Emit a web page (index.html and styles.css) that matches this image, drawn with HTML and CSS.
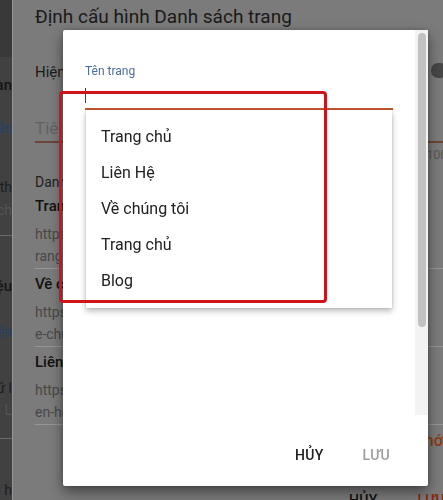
FILE: index.html
```html
<!DOCTYPE html>
<html lang="vi">
<head>
<meta charset="utf-8">
<title>Định cấu hình Danh sách trang</title>
<link rel="stylesheet" href="styles.css">
</head>
<body>
<div class="page">
  <aside class="side">
    <div class="side-head"></div>
    <div class="sl s1 strong"><span>Tổng quan</span></div>
    <div class="sl s2 blue"><span>Thêm vào phần</span></div>
    <div class="sl s3"><span>Danh sách trang th</span></div>
    <div class="sl s4 soft"><span>Các trang tĩnh ch</span></div>
    <div class="side-sep s5"></div>
    <div class="sl s6 strong"><span>Giới thiệu</span></div>
    <div class="sl s7 blue"><span>Chỉnh sửa tiên</span></div>
    <div class="sl s8"><span>Lưu trữ l</span></div>
    <div class="sl s9 soft"><span>Nhãn n L</span></div>
    <div class="side-sep s10"></div>
    <div class="sl s11"><span>Theo dõi u h</span></div>
  </aside>
  <main class="main">
    <h1 class="page-title">Định cấu hình Danh sách trang</h1>
    <div class="toggle-row">
      <span>Hiện tiêu đề</span>
      <span class="toggle"></span>
    </div>
    <div class="title-field">Tiêu đề</div>
    <div class="counter">0/100</div>
    <div class="sec">Danh sách trang</div>
    <div class="pitem">
      <div class="pt">Trang chủ</div>
      <div class="pu first">https://www.blog.com/p/t</div>
      <div class="pu">rang-chu.html</div>
    </div>
    <div class="pitem">
      <div class="pt">Về chúng tôi</div>
      <div class="pu first">https://www.blog.com/p/v</div>
      <div class="pu">e-chung-toi.html</div>
    </div>
    <div class="pitem">
      <div class="pt">Liên Hệ</div>
      <div class="pu first">https://www.blog.com/p/li</div>
      <div class="pu">en-he.html</div>
    </div>
    <div class="add">Thêm trang mới</div>
    <div class="foot">
      <span>HỦY</span>
      <span class="red">LƯU</span>
    </div>
  </main>
</div>

<div class="dialog">
  <div class="dbody">
    <div class="dcontent">
      <div class="label">Tên trang</div>
      <div class="field">
        <span class="caret"></span>
        <div class="menu">
          <div class="mi">Trang chủ</div>
          <div class="mi">Liên Hệ</div>
          <div class="mi">Về chúng tôi</div>
          <div class="mi">Trang chủ</div>
          <div class="mi">Blog</div>
        </div>
      </div>
    </div>
    <div class="scroll"><div class="thumb"></div></div>
  </div>
  <div class="dactions">
    <span class="btn cancel">HỦY</span>
    <span class="btn save">LƯU</span>
  </div>
</div>

<div class="annot"></div>
</body>
</html>
```
FILE: styles.css
```css
html, body {
  margin: 0;
  height: 100%;
  overflow: hidden;
}
body {
  font-family: Roboto, "Noto Sans", "Liberation Sans", sans-serif;
  background: #7b7b7b;
}
.page {
  display: flex;
  width: 470px;
  height: 500px;
}
.side {
  width: 12px;
  flex: none;
  background: #414141;
  border-right: 1px solid #949494;
  overflow: hidden;
  font-size: 14px;
  line-height: 20px;
  color: #1e1e1e;
}
.side-head {
  height: 57px;
  background: #393939;
}
.sl {
  display: flex;
  justify-content: flex-end;
  white-space: nowrap;
}
.sl.strong { font-weight: 500; color: #141414; font-size: 15px; }
.sl.blue { color: #24426b; }
.sl.soft { color: #555555; }
.side-sep { height: 1px; background: #6a6a6a; }
.s1 { margin-top: 18px; }
.s2 { margin-top: 23px; }
.s3 { margin-top: 39px; }
.s4 { margin-top: 3px; }
.s5 { margin-top: 15px; }
.s6 { margin-top: 40px; }
.s7 { margin-top: 26px; }
.s8 { margin-top: 36px; }
.s9 { margin-top: 2px; }
.s10 { margin-top: 18px; }
.s11 { margin-top: 41px; }

.main {
  flex: 1;
  min-width: 0;
  padding: 5px 23px 0 22px;
}
.page-title {
  margin: 0;
  font-size: 19px;
  line-height: 24px;
  font-weight: 400;
  color: #1a1a1a;
  white-space: nowrap;
}
.toggle-row {
  display: flex;
  justify-content: space-between;
  align-items: center;
  margin-top: 33px;
  height: 20px;
  font-size: 15px;
  color: #1a1a1a;
}
.toggle {
  width: 16px;
  height: 15px;
  border-radius: 7px;
  background: #474747;
  margin-top: -4px;
}
.title-field {
  margin-top: 35px;
  font-size: 17px;
  line-height: 22px;
  padding-bottom: 2px;
  color: #626262;
  border-bottom: 2px solid #6b4535;
}
.counter {
  margin-top: 4px;
  text-align: right;
  font-size: 12px;
  line-height: 16px;
  color: #555555;
}
.sec {
  margin-top: 10px;
  font-size: 14px;
  line-height: 18px;
  color: #1e1e1e;
}
.pitem {
  padding: 5px 0 1px;
  border-bottom: 1px solid #959595;
  white-space: nowrap;
}
.pt {
  font-size: 15px;
  font-weight: 500;
  line-height: 20px;
  color: #111111;
}
.pu {
  font-size: 14px;
  line-height: 22px;
  color: #474747;
}
.pu.first { margin-top: 7px; }
.add {
  margin-top: 6px;
  text-align: right;
  font-size: 16px;
  font-weight: 500;
  line-height: 20px;
  color: #8c3a12;
}
.foot {
  display: flex;
  justify-content: flex-end;
  gap: 40px;
  margin-top: 39px;
  padding-right: 2px;
  font-size: 14px;
  font-weight: 500;
  line-height: 20px;
  letter-spacing: 0.3px;
  color: #111111;
}
.foot .red { color: #8f1f14; }

.dialog {
  position: fixed;
  left: 63px;
  top: 30px;
  width: 365px;
  height: 456px;
  background: #ffffff;
  border-radius: 2px;
  box-shadow: 0 6px 14px rgba(0, 0, 0, 0.45), 0 0 4px rgba(0, 0, 0, 0.2);
  display: flex;
  flex-direction: column;
}
.dbody {
  display: flex;
  height: 385px;
}
.dcontent {
  flex: 1;
  padding: 33px 22px 0;
}
.scroll {
  width: 13px;
  flex: none;
  background: #f3f3f3;
  display: flex;
  justify-content: center;
}
.thumb {
  width: 8px;
  height: 294px;
  margin-top: 3px;
  background: #c2c2c2;
  border-radius: 4px;
}
.label {
  font-size: 12px;
  line-height: 16px;
  color: #4a6c9e;
}
.field {
  position: relative;
  box-sizing: border-box;
  height: 31px;
  padding-top: 9px;
  border-bottom: 2px solid #c4582c;
}
.caret {
  display: block;
  width: 1px;
  height: 15px;
  background: #444444;
}
.menu {
  position: absolute;
  top: calc(100% + 2px);
  left: 1px;
  right: 1px;
  padding: 9px 0;
  background: #ffffff;
  box-shadow: 0 3px 6px rgba(0, 0, 0, 0.28), 0 0 1px rgba(0, 0, 0, 0.25);
  z-index: 2;
}
.mi {
  height: 36px;
  line-height: 36px;
  padding-left: 15px;
  font-size: 16px;
  color: #212121;
}
.dactions {
  display: flex;
  justify-content: flex-end;
  gap: 11px;
  padding: 22px 24px 0;
}
.btn {
  height: 36px;
  padding: 0 14px;
  display: flex;
  align-items: center;
  font-size: 14px;
  font-weight: 500;
  letter-spacing: 0.3px;
}
.cancel { color: #202020; }
.save { color: #9e9e9e; }

.annot {
  position: fixed;
  left: 59px;
  top: 91px;
  width: 268px;
  height: 212px;
  box-sizing: border-box;
  border: 3px solid #d0121a;
  border-radius: 4px;
  z-index: 10;
}
```
